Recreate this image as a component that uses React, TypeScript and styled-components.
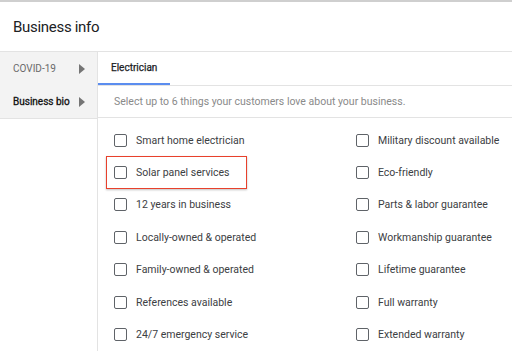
import styled, { createGlobalStyle } from 'styled-components';

const GlobalStyle = createGlobalStyle`
  html, body {
    margin: 0;
    padding: 0;
    background: #fff;
    font-family: Roboto, "Liberation Sans", Arial, sans-serif;
    overflow: hidden;
  }
`;

// Whole card
const Page = styled.div`
  width: 512px;
  height: 351px;
  border-top: 2px solid #cfcfcf;
  box-sizing: border-box;
  display: flex;
  flex-direction: column;
`;

const Header = styled.div`
  height: 49px;
  flex-shrink: 0;
  display: flex;
  align-items: center;
  padding-left: 13px;
  border-bottom: 1px solid #e3e3e3;
  font-size: 15px;
  letter-spacing: -0.3px;
  color: #202124;
`;

const Body = styled.div`
  flex: 1;
  display: flex;
  min-height: 0;
`;

const Sidebar = styled.div`
  width: 97px;
  flex-shrink: 0;
  border-right: 1px solid #e3e3e3;
`;

const SideList = styled.div`
  background: #f3f3f3;
  display: flex;
  flex-direction: column;
  border-bottom: 1px solid #e3e3e3;
`;

const SideItem = styled.div<{ $active?: boolean }>`
  height: 33px;
  display: flex;
  align-items: center;
  justify-content: space-between;
  padding: 0 12px 0 13px;
  font-size: 10px;
  color: ${(p) => (p.$active ? '#111' : '#6a6a6a')};
  -webkit-text-stroke: ${(p) => (p.$active ? '0.3px #111' : '0')};
`;

const Arrow = styled.span`
  width: 0;
  height: 0;
  border-top: 5px solid transparent;
  border-bottom: 5px solid transparent;
  border-left: 6px solid #757575;
`;

const Main = styled.div`
  flex: 1;
  display: flex;
  flex-direction: column;
`;

const Tabs = styled.div`
  height: 33px;
  display: flex;
  border-bottom: 1px solid #e3e3e3;
`;

const Tab = styled.div<{ $active?: boolean }>`
  width: 72px;
  box-sizing: border-box;
  padding-left: 13px;
  display: flex;
  align-items: center;
  font-size: 10px;
  color: #202124;
  -webkit-text-stroke: 0.25px #202124;
  border-bottom: 2px solid ${(p) => (p.$active ? '#5b8def' : 'transparent')};
`;

const Hint = styled.div`
  height: 31px;
  display: flex;
  align-items: center;
  padding-left: 16px;
  font-size: 10.5px;
  color: #8a8a8a;
  border-bottom: 1px solid #e3e3e3;
`;

const Grid = styled.div`
  display: grid;
  grid-template-columns: 242px 1fr;
  grid-auto-rows: 32.4px;
  padding: 6px 0 0 8px;
`;

const Option = styled.label<{ $highlight?: boolean }>`
  display: flex;
  align-items: center;
  gap: 9px;
  padding-left: 7px;
  font-size: 10.5px;
  color: #3c4043;
  box-sizing: border-box;
  width: ${(p) => (p.$highlight ? '141px' : 'auto')};
  border: 1.5px solid ${(p) => (p.$highlight ? '#e8412c' : 'transparent')};
  box-shadow: ${(p) => (p.$highlight ? '0 1px 2px rgba(0,0,0,0.25)' : 'none')};
`;

const Box = styled.span`
  width: 11px;
  height: 11px;
  border: 1.6px solid #5f6368;
  border-radius: 2px;
  flex-shrink: 0;
`;

const left = [
  'Smart home electrician',
  'Solar panel services',
  '12 years in business',
  'Locally-owned & operated',
  'Family-owned & operated',
  'References available',
  '24/7 emergency service',
];

const right = [
  'Military discount available',
  'Eco-friendly',
  'Parts & labor guarantee',
  'Workmanship guarantee',
  'Lifetime guarantee',
  'Full warranty',
  'Extended warranty',
];

const App = () => {
  return (
    <>
      <GlobalStyle />
      <Page>
        <Header>Business info</Header>
        <Body>
          <Sidebar>
            <SideList>
              <SideItem>
                COVID-19 <Arrow />
              </SideItem>
              <SideItem $active>
                Business bio <Arrow />
              </SideItem>
            </SideList>
          </Sidebar>
          <Main>
            <Tabs>
              <Tab $active>Electrician</Tab>
            </Tabs>
            <Hint>Select up to 6 things your customers love about your business.</Hint>
            <Grid>
              {left.map((l, i) => [
                <Option key={l} $highlight={i === 1}>
                  <Box />
                  {l}
                </Option>,
                <Option key={right[i]}>
                  <Box />
                  {right[i]}
                </Option>,
              ])}
            </Grid>
          </Main>
        </Body>
      </Page>
    </>
  );
};

export default App;
